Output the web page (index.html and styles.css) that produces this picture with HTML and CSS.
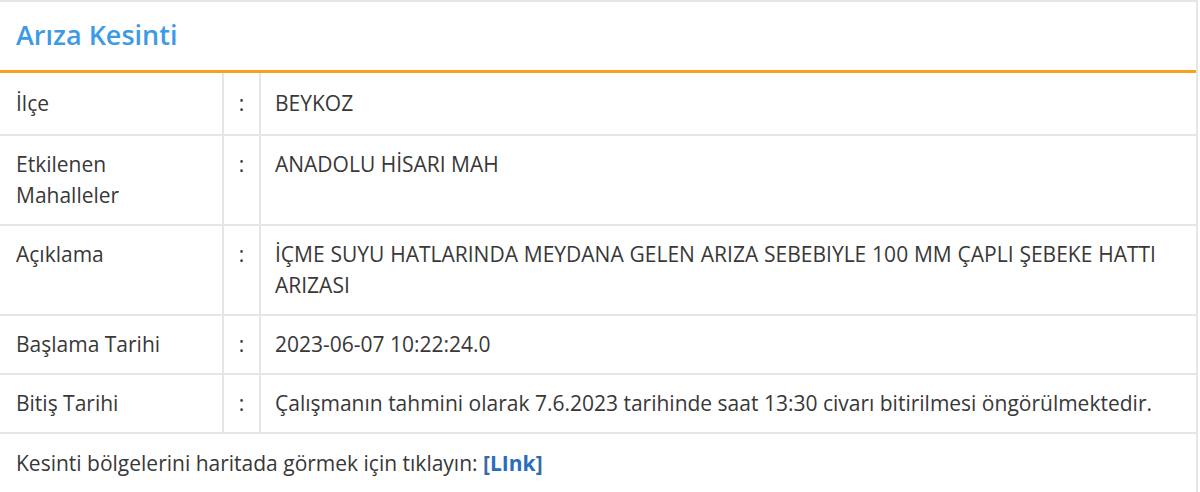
FILE: index.html
```html
<!DOCTYPE html>
<html lang="tr">
<head>
  <meta charset="UTF-8" />
  <meta name="viewport" content="width=device-width, initial-scale=1.0"/>
  <title>Arıza Kesinti</title>
  <link rel="stylesheet" href="styles.css">
</head>
<body>
  <div class="outage-card">
    <div class="outage-header">
      <h3>Arıza Kesinti</h3>
    </div>

    <table class="outage-table">
      <tr>
        <td class="label">İlçe</td>
        <td class="sep">:</td>
        <td class="value">BEYKOZ</td>
      </tr>
      <tr>
        <td class="label">Etkilenen Mahalleler</td>
        <td class="sep">:</td>
        <td class="value">ANADOLU HİSARI MAH</td>
      </tr>
      <tr>
        <td class="label">Açıklama</td>
        <td class="sep">:</td>
        <td class="value">İÇME SUYU HATLARINDA MEYDANA GELEN ARIZA SEBEBIYLE 100 MM ÇAPLI ŞEBEKE HATTI ARIZASI</td>
      </tr>
      <tr>
        <td class="label">Başlama Tarihi</td>
        <td class="sep">:</td>
        <td class="value">2023-06-07 10:22:24.0</td>
      </tr>
      <tr>
        <td class="label">Bitiş Tarihi</td>
        <td class="sep">:</td>
        <td class="value">Çalışmanın tahmini olarak 7.6.2023 tarihinde saat 13:30 civarı bitirilmesi öngörülmektedir.</td>
      </tr>
    </table>

    <div class="outage-footer">
      Kesinti bölgelerini haritada görmek için tıklayın: <span class="map-link">[<a href="#">LInk</a>]</span>
    </div>
  </div>
</body>
</html>
```

FILE: styles.css
```css
* {
  box-sizing: border-box;
  padding: 0;
  margin: 0;
}

body {
  background-color: #fff;
  font-family: "Open Sans", Arial, sans-serif;
  font-size: 21px;
  color: #383838;
}

.outage-card {
  width: 1200px;
  margin-left: -2px;
  border: 2px solid #e6e6e6;
  border-bottom: none;
  background-color: #fff;
}

.outage-header {
  height: 71px;
  padding: 0 16px;
  display: flex;
  align-items: center;
  border-bottom: 3px solid #f5a31a;
}

.outage-header h3 {
  font-size: 27px;
  font-weight: 600;
  color: #3d9ae5;
  margin-top: -3px;
}

.outage-table {
  width: 100%;
  border-collapse: collapse;
}

.outage-table td {
  border-bottom: 2px solid #e6e6e6;
  padding: 13px 14px 13px;
  line-height: 31px;
  vertical-align: top;
}

.outage-table tr:first-child td {
  padding-top: 15px;
  padding-bottom: 15px;
}

.outage-table td.label {
  width: 223px;
  padding-left: 16px;
  border-right: 2px solid #e6e6e6;
}

.outage-table td.sep {
  width: 37px;
  padding-left: 0;
  padding-right: 0;
  text-align: center;
  border-right: 2px solid #e6e6e6;
}

.outage-table td.value {
  text-align: justify;
  padding-right: 40px;
}

.outage-footer {
  padding: 14px 16px 20px;
  line-height: 31px;
}

.map-link {
  font-weight: 700;
  color: #3b6aa0;
}

.map-link a {
  color: #2a6dbf;
  text-decoration: none;
}
```
